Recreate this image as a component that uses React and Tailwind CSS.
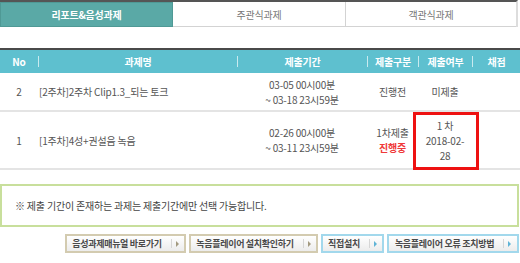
import React from 'react';

const rows = [
  {
    no: '2',
    title: '[2주차]2주차 Clip1.3_되는 토크',
    period: ['03-05 00시00분', '~ 03-18 23시59분'],
    kind: ['진행전'],
    status: ['미제출'],
    h: 'h-[39px]',
  },
  {
    no: '1',
    title: '[1주차]4성+권설음 녹음',
    period: ['02-26 00시00분', '~ 03-11 23시59분'],
    kind: ['1차제출', '진행중'],
    status: ['1 차', '2018-02-', '28'],
    h: 'h-[58px]',
    marked: true,
  },
];

const buttons = [
  { label: '음성과제매뉴얼 바로가기', w: 'w-[121px]', tone: 'beige' },
  { label: '녹음플레이어 설치확인하기', w: 'w-[129px]', tone: 'beige' },
  { label: '직접설치', w: 'w-[63px]', tone: 'blue' },
  { label: '녹음플레이어 오류 조치방법', w: 'w-[132px]', tone: 'blue' },
];

const Sep = () => <span className="w-px h-[11px] bg-[#c9eaef] shrink-0" />;

const ArrowMark = ({ tone }) => (
  <span className="flex items-center gap-[4px] ml-[9px] shrink-0">
    <span className="w-px h-[9px] bg-[#d6d6d6]" />
    <span
      className={
        tone === 'blue'
          ? 'w-0 h-0 border-y-[3px] border-y-transparent border-l-[3px] border-l-[#5fb3d6]'
          : 'w-0 h-0 border-y-[3px] border-y-transparent border-l-[3px] border-l-[#a39a80]'
      }
    />
  </span>
);

export default function App() {
  return (
    <div
      className="w-[520px] h-[263px] bg-white overflow-hidden text-[10px] tracking-[-0.2px] text-[#555]"
      style={{ fontFamily: '"Noto Sans CJK KR", "Noto Sans", sans-serif' }}
    >
      {/* tabs */}
      <div className="border-t-2 border-[#555] flex w-[518px] h-[27px] border-r-2 border-r-[#ddd]">
        <div className="w-[173px] bg-[#5aa9a6] border border-[#4f9995] text-white font-bold flex items-center justify-center">
          리포트&음성과제
        </div>
        <div className="w-[173px] border-b border-r border-[#d3d3d3] flex items-center justify-center text-[#777]">
          주관식과제
        </div>
        <div className="flex-1 border-b border-[#d3d3d3] flex items-center justify-center text-[#777]">
          객관식과제
        </div>
      </div>

      {/* table */}
      <div className="mt-[21px] border-t-2 border-[#4a4a4a]">
        <div className="h-[23px] bg-[#5ec0cf] text-white font-bold flex items-center">
          <div className="w-[38px] text-center">No</div>
          <Sep />
          <div className="w-[198px] text-center">과제명</div>
          <Sep />
          <div className="w-[129px] text-center">제출기간</div>
          <Sep />
          <div className="w-[50px] text-center">제출구분</div>
          <Sep />
          <div className="w-[53px] text-center">제출여부</div>
          <Sep />
          <div className="flex-1 text-center">채점</div>
        </div>

        {rows.map((r) => (
          <div key={r.no} className={`${r.h} flex items-center border-b-2 border-[#e4e4e4] leading-[15px]`}>
            <div className="w-[38px] text-center">{r.no}</div>
            <div className="w-[199px] pl-px">{r.title}</div>
            <div className="w-[130px] text-center">
              {r.period.map((p) => (
                <div key={p}>{p}</div>
              ))}
            </div>
            <div className="w-[51px] text-center">
              {r.kind.map((k, i) => (
                <div key={k} className={i === 1 ? 'text-[#f0393a] font-bold' : ''}>
                  {k}
                </div>
              ))}
            </div>
            <div className="w-[54px] self-stretch relative flex flex-col justify-center items-center">
              {r.status.map((s) => (
                <div key={s}>{s}</div>
              ))}
              {r.marked && (
                <div className="absolute -left-[5px] -right-[7px] top-0 -bottom-[2px] border-[3px] border-[#ee1111]" />
              )}
            </div>
            <div className="flex-1" />
          </div>
        ))}
      </div>

      {/* notice */}
      <div className="mt-[14px] w-[519px] h-[43px] border-2 border-[#c8df9c] flex items-center pl-[13px] text-[#444]">
        ※ 제출 기간이 존재하는 과제는 제출기간에만 선택 가능합니다.
      </div>

      {/* buttons */}
      <div className="mt-[7px] flex justify-end gap-[3px] pr-[1px]">
        {buttons.map((b) => (
          <div
            key={b.label}
            className={`${b.w} h-[19px] border-2 ${
              b.tone === 'blue' ? 'border-[#a2d8ec]' : 'border-[#d3cbb0]'
            } bg-gradient-to-b from-white to-[#ececec] flex items-center justify-center font-bold text-[#4a4a4a] text-[9px] tracking-[-0.3px] whitespace-nowrap`}
          >
            {b.label}
            <ArrowMark tone={b.tone} />
          </div>
        ))}
      </div>
    </div>
  );
}
